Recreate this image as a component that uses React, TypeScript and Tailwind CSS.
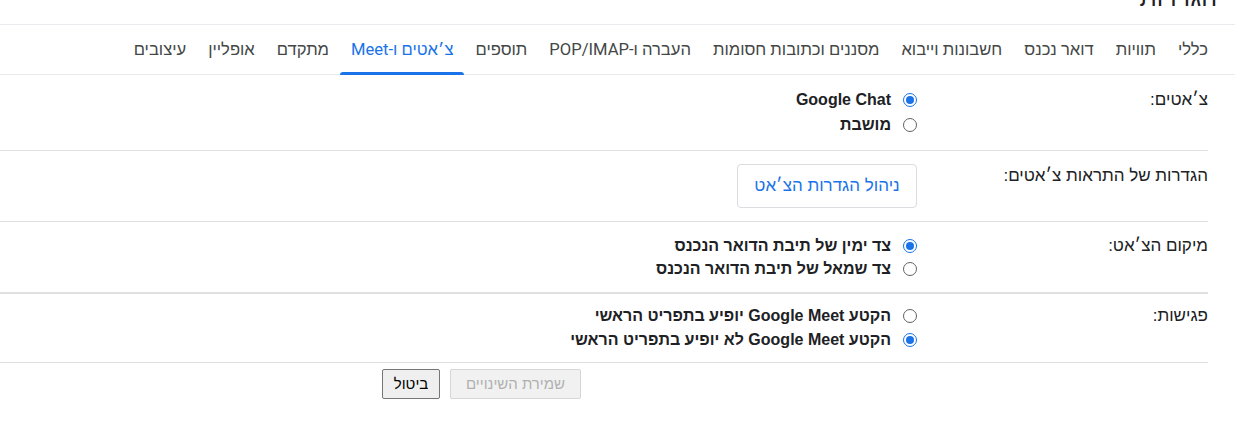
import React from "react";

const tabs = [
  "כללי",
  "תוויות",
  "דואר נכנס",
  "חשבונות וייבוא",
  "מסננים וכתובות חסומות",
  "העברה ו-POP/IMAP",
  "תוספים",
  "צ׳אטים ו-Meet",
  "מתקדם",
  "אופליין",
  "עיצובים",
];

function Radio({ checked }: { checked: boolean }) {
  return checked ? (
    <span className="inline-flex items-center justify-center w-[14px] h-[14px] rounded-full border-[1.5px] border-[#1a73e8] shrink-0">
      <span className="w-[8px] h-[8px] rounded-full bg-[#1a73e8]" />
    </span>
  ) : (
    <span className="inline-block w-[14px] h-[14px] rounded-full border border-[#5f6368] shrink-0" />
  );
}

function Option({ checked, children, h }: { checked: boolean; children: React.ReactNode; h: string }) {
  return (
    <div className={`flex items-center gap-[12px] ${h}`}>
      <Radio checked={checked} />
      <span className="font-bold text-[16px] text-[#202124] whitespace-nowrap">{children}</span>
    </div>
  );
}

export default function App() {
  const font = { fontFamily: "'Liberation Sans', Arial, sans-serif" };
  const tabFont = { fontFamily: "Roboto, 'Liberation Sans', Arial, sans-serif" };
  return (
    <div dir="rtl" className="w-[1235px] h-[424px] bg-white overflow-hidden text-[#202124]" style={font}>
      <div className="h-[25px] border-b border-[#e8eaed] overflow-hidden pr-[18px]">
        <div className="text-[25px] leading-[28px] mt-[-17px] text-[#202124]">הגדרות</div>
      </div>
      <div className="h-[50px] border-b border-[#e8eaed] flex items-stretch pr-[16px]" style={tabFont}>
        {tabs.map((t, i) => {
          const active = i === 7;
          return (
            <div
              key={t}
              className={`relative flex items-center pt-[2px] px-[11px] text-[16.6px] whitespace-nowrap ${active ? "text-[#1a73e8]" : "text-[#444746]"}`}
            >
              {t}
              {active && <span className="absolute left-0 right-0 bottom-[-1px] h-[3px] bg-[#1a73e8] rounded-t-[3px]" />}
            </div>
          );
        })}
      </div>
      <div className="mr-[27px]">
        <div className="h-[76px] border-b border-[#e0e0e0] flex pt-[13px]">
          <div className="w-[291px] shrink-0 text-[17px] leading-[24px]">צ׳אטים:</div>
          <div className="flex flex-col">
            <Option checked h="h-[24px]">Google Chat</Option>
            <Option checked={false} h="h-[26px]">מושבת</Option>
          </div>
        </div>
        <div className="h-[71px] border-b border-[#e0e0e0] flex pt-[13px]">
          <div className="w-[291px] shrink-0 text-[17px] leading-[24px]">הגדרות של התראות צ׳אטים:</div>
          <div>
            <div className="w-[180px] h-[44px] border border-[#dadce0] rounded-[4px] flex items-center justify-center text-[17px] text-[#1a73e8]">
              ניהול הגדרות הצ׳אט
            </div>
          </div>
        </div>
        <div className="h-[72px] border-b-2 border-[#e0e0e0] flex pt-[13px]">
          <div className="w-[291px] shrink-0 text-[17px] leading-[22px]">מיקום הצ׳אט:</div>
          <div className="flex flex-col">
            <Option checked h="h-[22px]">צד ימין של תיבת הדואר הנכנס</Option>
            <Option checked={false} h="h-[24px]">צד שמאל של תיבת הדואר הנכנס</Option>
          </div>
        </div>
        <div className="h-[69px] border-b border-[#e0e0e0] flex pt-[10px]">
          <div className="w-[291px] shrink-0 text-[17px] leading-[24px]">פגישות:</div>
          <div className="flex flex-col">
            <Option checked={false} h="h-[23px]">הקטע Google Meet יופיע בתפריט הראשי</Option>
            <Option checked h="h-[25px]">הקטע Google Meet לא יופיע בתפריט הראשי</Option>
          </div>
        </div>
        <div className="flex pt-[6px] pr-[627px] gap-[10px]">
          <div className="h-[30px] w-[131px] flex items-center justify-center border border-[#d5d5d5] bg-[#f1f1f1] rounded-[2px] text-[15px] text-[#b0b0b0]">
            שמירת השינויים
          </div>
          <div className="h-[30px] w-[58px] flex items-center justify-center border border-[#767676] bg-[#efefef] rounded-[2px] text-[15px] text-black">
            ביטול
          </div>
        </div>
      </div>
    </div>
  );
}
